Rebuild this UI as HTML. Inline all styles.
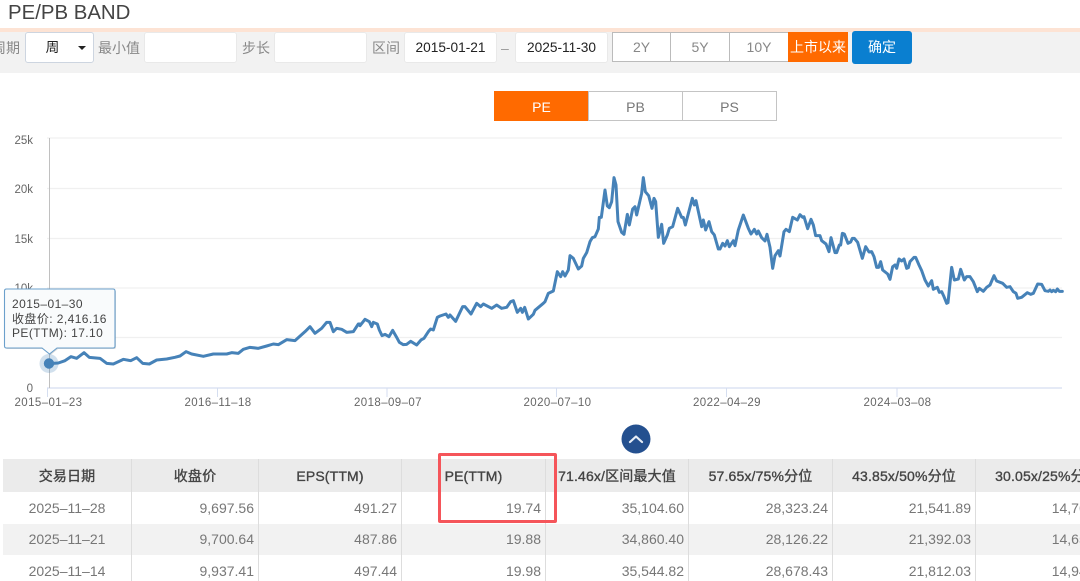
<!DOCTYPE html>
<html lang="zh"><head><meta charset="utf-8"><title>PE/PB BAND</title>
<style>
html,body{margin:0;padding:0;background:#fff}
html{width:1080px;height:581px;overflow:hidden}
body{position:relative;width:1080px;height:581px;overflow:hidden;font-family:"Liberation Sans","Noto Sans CJK SC",sans-serif;color:#666;filter:blur(.3px)}
.a{position:absolute;box-sizing:border-box;white-space:nowrap}
.lab{font-size:14px;color:#888;top:38px;line-height:20px}
.inp{top:32px;height:31px;background:#fff;border:1px solid #e9e9e9;border-radius:3px;font-size:13.7px;color:#222;text-align:center;line-height:29px}
.yr{top:32px;height:30px;background:#fff;border:1px solid #bbb;font-size:14px;color:#888;text-align:center;line-height:28px}
.tab{top:91px;height:30px;background:#fff;border:1px solid #c4c4c4;font-size:14px;color:#777;text-align:center;line-height:30px}
svg text{font-family:"Liberation Sans","Noto Sans CJK SC",sans-serif}
table{position:absolute;left:3px;top:459px;width:1116px;table-layout:fixed;border-collapse:separate;border-spacing:0;font-size:14px;color:#777}
th{height:33px;background:#ebebeb;color:#444;font-weight:400;-webkit-text-stroke:.35px #444;letter-spacing:.15px;text-align:center;padding:0;border-right:1px solid #ddd;box-sizing:border-box;white-space:nowrap;overflow:visible}
td{height:31.5px;padding:0 4px 0 0;text-align:right;border-right:1px solid #ddd;box-sizing:border-box;white-space:nowrap;overflow:hidden}
td:first-child{text-align:center;padding:0}
tr.g td{background:#f2f2f2}
</style></head><body>
<div class="a" style="left:8px;top:1px;font-size:20.4px;line-height:24px;color:#444">PE/PB BAND</div>
<div class="a" style="left:0;top:31px;width:1080px;height:42px;background:#f2f2f2"></div>
<div class="a" style="left:0;top:27.5px;width:1080px;height:4px;background:#fde3d4"></div>

<div class="a lab" style="left:-8px">周期</div>
<div class="a inp" style="left:25px;width:69px;border-color:#cdd5e0;color:#222;padding-right:14px">周</div>
<div class="a" style="left:78px;top:46px;width:0;height:0;border-left:4px solid transparent;border-right:4px solid transparent;border-top:4px solid #222"></div>
<div class="a lab" style="left:98px">最小值</div>
<div class="a inp" style="left:144px;width:93px"></div>
<div class="a lab" style="left:242px">步长</div>
<div class="a inp" style="left:274px;width:93px"></div>
<div class="a lab" style="left:372px">区间</div>
<div class="a inp" style="left:404px;width:93px">2015-01-21</div>
<div class="a lab" style="left:501px;color:#999">–</div>
<div class="a inp" style="left:515px;width:93px">2025-11-30</div>
<div class="a yr" style="left:612px;width:59px">2Y</div>
<div class="a yr" style="left:670px;width:60px">5Y</div>
<div class="a yr" style="left:729px;width:60px">10Y</div>
<div class="a yr" style="left:788px;width:60px;background:#ff6a00;border-color:#ff6a00;color:#fff">上市以来</div>
<div class="a" style="left:852px;top:31px;width:60px;height:33px;background:#0a7fd0;border-radius:3px;color:#fff;font-size:14px;text-align:center;line-height:33px">确定</div>

<div class="a tab" style="left:494px;width:95px;background:#ff6a00;border-color:#ff6a00;color:#fff">PE</div>
<div class="a tab" style="left:588px;width:95px">PB</div>
<div class="a tab" style="left:682px;width:95px">PS</div>

<svg class="a" style="left:0;top:0" width="1080" height="458" viewBox="0 0 1080 458">
<g stroke="#f0f0f0" stroke-width="1.2">
<line x1="47" y1="138" x2="1062" y2="138"/>
<line x1="47" y1="188.5" x2="1062" y2="188.5"/>
<line x1="47" y1="238.5" x2="1062" y2="238.5"/>
<line x1="47" y1="288" x2="1062" y2="288"/>
<line x1="47" y1="337.5" x2="1062" y2="337.5"/>
</g>
<line x1="47" y1="388" x2="1062" y2="388" stroke="#d5def0" stroke-width="1.2"/>
<g stroke="#d5def0" stroke-width="1">
<line x1="47.5" y1="388" x2="47.5" y2="397"/>
<line x1="217.5" y1="388" x2="217.5" y2="397"/>
<line x1="387" y1="388" x2="387" y2="397"/>
<line x1="556.5" y1="388" x2="556.5" y2="397"/>
<line x1="726.5" y1="388" x2="726.5" y2="397"/>
<line x1="897" y1="388" x2="897" y2="397"/>
</g>
<line x1="49.5" y1="138" x2="49.5" y2="388" stroke="#c0c0c0" stroke-width="1"/>
<g font-size="11.5" fill="#666" text-anchor="end">
<text x="33" y="144">25k</text>
<text x="33" y="193">20k</text>
<text x="33" y="243">15k</text>
<text x="33" y="292">10k</text>
<text x="33" y="342">5k</text>
<text x="33" y="392">0</text>
</g>
<g font-size="11.5" fill="#666" text-anchor="middle" letter-spacing=".4">
<text x="48.5" y="406">2015–01–23</text>
<text x="218" y="406">2016–11–18</text>
<text x="388" y="406">2018–09–07</text>
<text x="557.5" y="406">2020–07–10</text>
<text x="727" y="406">2022–04–29</text>
<text x="897.5" y="406">2024–03–08</text>
</g>
<g fill="none" stroke="#4682b8" stroke-width="9" stroke-linejoin="round" stroke-linecap="round">
<polyline transform="translate(0,270) scale(.33333)" points="148,281 175,279 195,272 213,260 230,265 252,248 268,262 300,265 320,280 340,282 370,268 392,272 410,263 428,280 448,282 470,270 500,267 525,262 540,258 558,245 575,252 610,259 640,252 680,252 695,248 715,250 730,238 750,232 775,235 800,228 820,222 835,224 860,209 885,212 915,185 930,170 945,190 965,175 980,157 990,157 1000,185 1010,175 1025,178 1040,187 1060,185 1075,162 1080,162"/>
<polyline transform="translate(360,130) scale(.33333)" points="0,587 15,568 28,575 35,590 40,577 52,582 58,600 66,617 75,613 87,620 98,601 110,622 118,637 130,644 140,643 152,634 170,645 183,630 192,625 205,605 212,597 220,600 232,562 240,558 258,552 265,562 270,555 287,574 308,530 315,530 333,552 350,520 362,530 370,522 395,535 410,525 425,535 440,532 452,515 460,512 472,547 482,535 487,547 494,532 505,567 520,553 525,541 550,520 555,515 565,490 580,483 592,425 602,440 608,425 615,438 625,420 630,377 640,385 655,417 665,408 670,385 680,368 690,335 697,323 705,320 715,297 718,262 724,262 735,180 742,228 748,233 755,215 762,143 768,165 774,275 785,307 792,313 802,253 808,285 818,237 825,230 830,255 845,190 850,143 856,185 866,197 876,235 882,205 887,215 895,322 905,283 911,340 922,315 928,295 938,290 953,235 965,262 970,262 976,285 997,205 1003,225 1008,212 1025,290 1030,270 1037,300 1047,275 1055,305 1063,315 1075,357 1080,355"/>
<polyline transform="translate(720,130) scale(.33333)" points="0,357 8,340 15,348 22,332 28,350 40,332 45,347 55,300 70,255 85,295 93,312 103,298 110,312 115,303 125,323 135,333 141,313 150,352 158,415 165,377 175,362 180,378 192,305 198,298 208,305 218,262 232,270 240,254 248,262 252,260 263,296 273,268 280,285 287,317 300,317 305,332 318,342 327,365 333,323 345,368 350,368 358,345 362,345 367,310 373,312 384,340 392,336 397,325 403,325 413,337 427,385 437,350 447,366 455,365 462,380 470,412 476,412 482,395 488,420 503,432 510,448 518,410 525,405 530,415 537,387 545,393 552,387 560,415 565,413 570,395 582,382 587,382 597,405 605,422 615,450 625,468 635,452 640,478 652,472 658,487 665,485 672,500 680,520 684,518 695,412 703,450 715,447 722,418 733,450 740,440 750,440 760,455 772,485 778,475 790,484 800,472 810,465 822,437 830,453 848,460 860,472 870,470 880,485 888,490 893,505 905,502 922,488 932,493 940,490 953,462 965,463 975,482 985,484 990,480 995,485 1000,481 1007,485 1012,477 1018,484 1027,484"/>
</g>
<circle cx="49" cy="363.5" r="9.5" fill="#4682b8" fill-opacity=".25"/>
<circle cx="49" cy="363.5" r="5.2" fill="#4682b8"/>
<path d="M6.5 289 H113 Q115 289 115 291 V346 Q115 348 113 348 H57 L49.5 354 L42 348 H6.5 Q4.5 348 4.5 346 V291 Q4.5 289 6.5 289 Z" fill="#000" fill-opacity=".15" transform="translate(1,1)"/>
<path d="M6.5 289 H113 Q115 289 115 291 V346 Q115 348 113 348 H57 L49.5 354 L42 348 H6.5 Q4.5 348 4.5 346 V291 Q4.5 289 6.5 289 Z" fill="#f9fbfc" stroke="#6ba0cc" stroke-width="1.1"/>
<g font-size="12" fill="#444" letter-spacing=".42">
<text x="12" y="308">2015–01–30</text>
<text x="12" y="323">收盘价: 2,416.16</text>
<text x="12" y="337">PE(TTM): 17.10</text>
</g>
<circle cx="636" cy="439" r="14.5" fill="#24508f"/>
<path d="M630 442 L636 436.5 L642 442" fill="none" stroke="#e6edf6" stroke-width="2.2" stroke-linecap="round" stroke-linejoin="round"/>
</svg>

<table>
<colgroup><col style="width:129px"><col style="width:127px"><col style="width:143px"><col style="width:144px"><col style="width:143px"><col style="width:144px"><col style="width:143px"><col style="width:143px"></colgroup>
<tr><th>交易日期</th><th>收盘价</th><th>EPS(TTM)</th><th>PE(TTM)</th><th>71.46x/区间最大值</th><th>57.65x/75%分位</th><th>43.85x/50%分位</th><th>30.05x/25%分位</th></tr>
<tr><td>2025–11–28</td><td>9,697.56</td><td>491.27</td><td>19.74</td><td>35,104.60</td><td>28,323.24</td><td>21,541.89</td><td>14,760.54</td></tr>
<tr class="g"><td>2025–11–21</td><td>9,700.64</td><td>487.86</td><td>19.88</td><td>34,860.40</td><td>28,126.22</td><td>21,392.03</td><td>14,657.84</td></tr>
<tr><td>2025–11–14</td><td>9,937.41</td><td>497.44</td><td>19.98</td><td>35,544.82</td><td>28,678.43</td><td>21,812.03</td><td>14,945.63</td></tr>
</table>
<div class="a" style="left:438px;top:453px;width:119px;height:70px;border:3px solid #f5555a;border-radius:2px"></div>
</body></html>
